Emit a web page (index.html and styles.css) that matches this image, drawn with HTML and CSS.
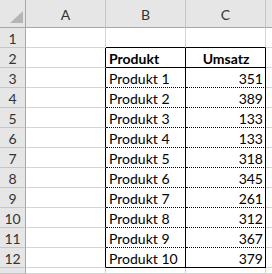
FILE: index.html
```html
<!DOCTYPE html>
<html>
<head>
<meta charset="utf-8">
<link rel="stylesheet" href="styles.css">
</head>
<body>
<div class="sheet">
  <div class="corner"><svg class="tri" width="13" height="12" viewBox="0 0 13 12"><polygon points="0,12 13,12 13,0" fill="#b5b5b5"/></svg></div>
  <div class="colh">A</div>
  <div class="colh">B</div>
  <div class="colh">C</div>
  <div class="colh last"></div>

  <div class="rowh">1</div>
  <div class="cell"></div>
  <div class="cell bb"></div>
  <div class="cell bb"></div>
  <div class="cell last"></div>

  <div class="rowh">2</div>
  <div class="cell br"></div>
  <div class="cell br bb bold">Produkt</div>
  <div class="cell br bb bold center">Umsatz</div>
  <div class="cell last"></div>

  <div class="rowh">3</div>
  <div class="cell br"></div>
  <div class="cell br bd">Produkt 1</div>
  <div class="cell br bd num">351</div>
  <div class="cell last"></div>

  <div class="rowh">4</div>
  <div class="cell br"></div>
  <div class="cell br bd">Produkt 2</div>
  <div class="cell br bd num">389</div>
  <div class="cell last"></div>

  <div class="rowh">5</div>
  <div class="cell br"></div>
  <div class="cell br bd">Produkt 3</div>
  <div class="cell br bd num">133</div>
  <div class="cell last"></div>

  <div class="rowh">6</div>
  <div class="cell br"></div>
  <div class="cell br bd">Produkt 4</div>
  <div class="cell br bd num">133</div>
  <div class="cell last"></div>

  <div class="rowh">7</div>
  <div class="cell br"></div>
  <div class="cell br bd">Produkt 5</div>
  <div class="cell br bd num">318</div>
  <div class="cell last"></div>

  <div class="rowh">8</div>
  <div class="cell br"></div>
  <div class="cell br bd">Produkt 6</div>
  <div class="cell br bd num">345</div>
  <div class="cell last"></div>

  <div class="rowh">9</div>
  <div class="cell br"></div>
  <div class="cell br bd">Produkt 7</div>
  <div class="cell br bd num">261</div>
  <div class="cell last"></div>

  <div class="rowh">10</div>
  <div class="cell br"></div>
  <div class="cell br bd">Produkt 8</div>
  <div class="cell br bd num">312</div>
  <div class="cell last"></div>

  <div class="rowh">11</div>
  <div class="cell br"></div>
  <div class="cell br bd">Produkt 9</div>
  <div class="cell br bd num">367</div>
  <div class="cell last"></div>

  <div class="rowh">12</div>
  <div class="cell br"></div>
  <div class="cell br bb">Produkt 10</div>
  <div class="cell br bb num">379</div>
  <div class="cell last"></div>

  <div class="rowh"></div>
  <div class="cell"></div>
  <div class="cell"></div>
  <div class="cell"></div>
  <div class="cell last"></div>
</div>
</body>
</html>
```
FILE: styles.css
```css
html, body {
  margin: 0;
  padding: 0;
  background: #ffffff;
}
body {
  font-family: "Lato", "Liberation Sans", sans-serif;
  font-size: 14px;
  color: #000;
  overflow: hidden;
}
.sheet {
  display: grid;
  grid-template-columns: 26px 80px 80px 80px 6px;
  grid-template-rows: 28px repeat(12, 20px) 6px;
  width: 272px;
  height: 274px;
  overflow: hidden;
}
.sheet > div {
  box-sizing: border-box;
  border-right: 1px solid #d4d4d4;
  border-bottom: 1px solid #d4d4d4;
  white-space: nowrap;
  overflow: hidden;
}
.corner {
  background: #e6e6e6;
  position: relative;
  border-right-color: #a8a8a8 !important;
  border-bottom-color: #a8a8a8 !important;
}
.tri {
  position: absolute;
  left: 10px;
  top: 11px;
}
.colh {
  background: #e6e6e6;
  color: #333;
  text-align: center;
  line-height: 26px;
  padding-top: 2px;
  border-right-color: #c6c6c6 !important;
  border-bottom-color: #a8a8a8 !important;
}
.rowh {
  background: #e6e6e6;
  color: #333;
  text-align: center;
  line-height: 20px;
  padding-top: 1px;
  border-right-color: #a8a8a8 !important;
  border-bottom-color: #c6c6c6 !important;
}
.cell {
  line-height: 20px;
  padding: 1px 2px 0 3px;
}
.br { border-right-color: #000 !important; }
.bb { border-bottom-color: #000 !important; }
.bd { border-bottom: 1px dotted #000 !important; }
.bold { font-weight: bold; }
.center { text-align: center; }
.num { text-align: right; padding-right: 2px; }
.last { border-right: none !important; }
```
